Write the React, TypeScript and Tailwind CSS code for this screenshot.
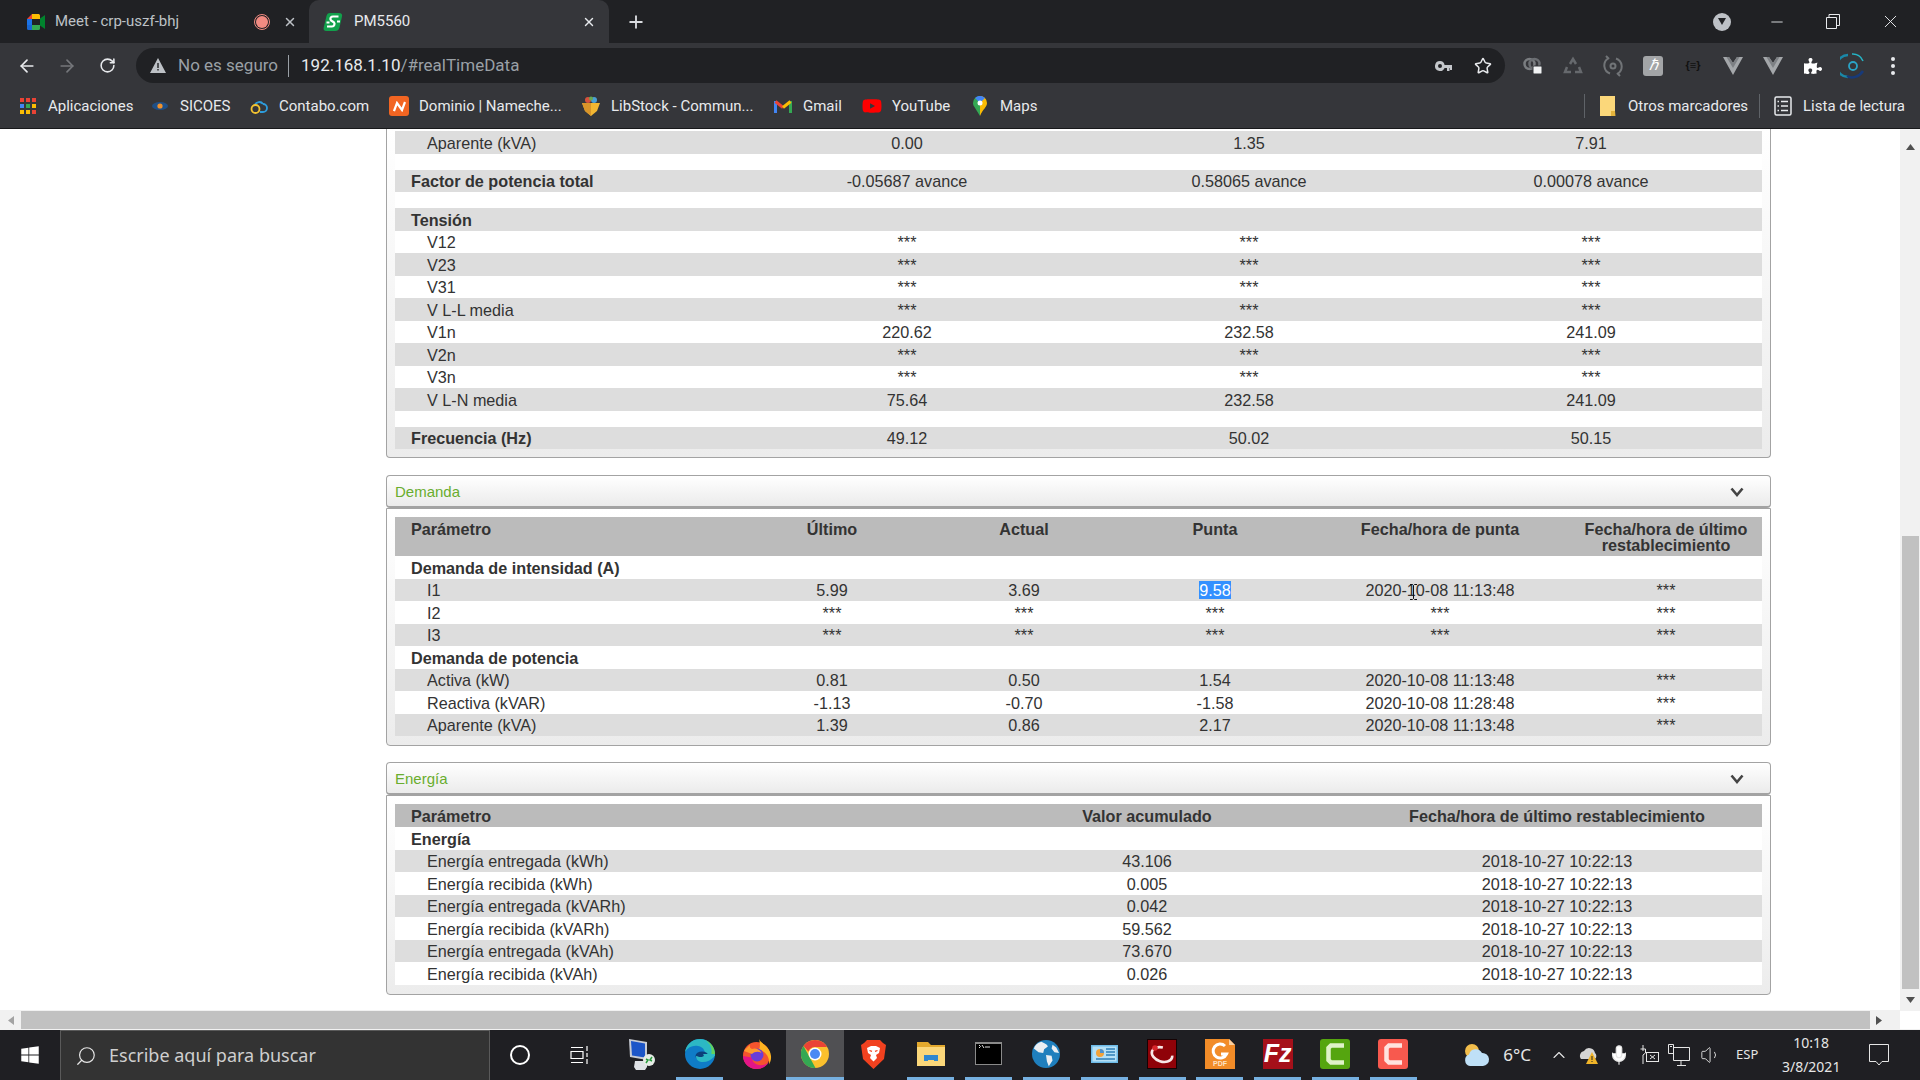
import React from "react";
import { ArrowLeft, ArrowRight, RotateCw, Star, X, Plus, Mic, Volume1, Search, ChevronUp, Minus } from "lucide-react";
import { FaPuzzlePiece, FaWindows, FaYoutube } from "react-icons/fa";

const Z = { fontFamily: '"Liberation Sans", Arial, sans-serif' };
const UI = { fontFamily: 'Roboto, "Noto Sans", sans-serif' };

type Row = { label: string; vals?: string[]; bold?: boolean; tint?: boolean; spacer?: boolean };

const topRows: Row[] = [
  { label: "Aparente (kVA)", vals: ["0.00", "1.35", "7.91"], tint: true },
  { label: "", spacer: true },
  { label: "Factor de potencia total", vals: ["-0.05687 avance", "0.58065 avance", "0.00078 avance"], bold: true, tint: true },
  { label: "", spacer: true },
  { label: "Tensión", vals: ["", "", ""], bold: true, tint: true },
  { label: "V12", vals: ["***", "***", "***"] },
  { label: "V23", vals: ["***", "***", "***"], tint: true },
  { label: "V31", vals: ["***", "***", "***"] },
  { label: "V L-L media", vals: ["***", "***", "***"], tint: true },
  { label: "V1n", vals: ["220.62", "232.58", "241.09"] },
  { label: "V2n", vals: ["***", "***", "***"], tint: true },
  { label: "V3n", vals: ["***", "***", "***"] },
  { label: "V L-N media", vals: ["75.64", "232.58", "241.09"], tint: true },
  { label: "", spacer: true },
  { label: "Frecuencia (Hz)", vals: ["49.12", "50.02", "50.15"], bold: true, tint: true },
];

const demRows: Row[] = [
  { label: "Demanda de intensidad (A)", vals: ["", "", "", "", ""], bold: true },
  { label: "I1", vals: ["5.99", "3.69", "9.58", "2020-10-08 11:13:48", "***"], tint: true },
  { label: "I2", vals: ["***", "***", "***", "***", "***"] },
  { label: "I3", vals: ["***", "***", "***", "***", "***"], tint: true },
  { label: "Demanda de potencia", vals: ["", "", "", "", ""], bold: true },
  { label: "Activa (kW)", vals: ["0.81", "0.50", "1.54", "2020-10-08 11:13:48", "***"], tint: true },
  { label: "Reactiva (kVAR)", vals: ["-1.13", "-0.70", "-1.58", "2020-10-08 11:28:48", "***"] },
  { label: "Aparente (kVA)", vals: ["1.39", "0.86", "2.17", "2020-10-08 11:13:48", "***"], tint: true },
];

const D = "2018-10-27 10:22:13";
const eneRows: Row[] = [
  { label: "Energía", vals: ["", ""], bold: true },
  { label: "Energía entregada (kWh)", vals: ["43.106", D], tint: true },
  { label: "Energía recibida (kWh)", vals: ["0.005", D] },
  { label: "Energía entregada (kVARh)", vals: ["0.042", D], tint: true },
  { label: "Energía recibida (kVARh)", vals: ["59.562", D] },
  { label: "Energía entregada (kVAh)", vals: ["73.670", D], tint: true },
  { label: "Energía recibida (kVAh)", vals: ["0.026", D] },
];

function DataRows({ rows, grid }: { rows: Row[]; grid: string }) {
  return (
    <>
      {rows.map((r, i) =>
        r.spacer ? (
          <div key={i} className="h-[16px] bg-white" />
        ) : (
          <div key={i} className={`grid ${grid} h-[22.5px] items-center pt-[1px] leading-[20px] ${r.tint ? "bg-[#dddddd]" : "bg-white"}`}>
            <div className={r.bold ? "pl-[16px] font-bold" : "pl-[32px]"}>{r.label}</div>
            {(r.vals || []).map((v, j) => (
              <div key={j} className="relative text-center">
                {v === "9.58" ? <span className="bg-[#3390ff] text-white">{v}</span> : v}
                {v === "2020-10-08 11:13:48" && r.label === "I1" && <Cursor />}
              </div>
            ))}
          </div>
        )
      )}
    </>
  );
}

function Cursor() {
  return (
    <svg className="absolute left-[99px] top-[4px]" width="9" height="16" viewBox="0 0 9 16" fill="none" stroke="#111" strokeWidth="1">
      <path d="M1 .5h2.500L4.500 1.500 5.500.5H8M4.500 1.500v13M1 15.500h2.500l1-1 1 1H8" />
    </svg>
  );
}

function SectionHead({ title }: { title: string }) {
  return (
    <div className="flex h-[33px] items-center justify-between rounded-[4px] border border-b-2 border-[#a3a3a3] bg-linear-to-b from-white to-[#ebebeb] pl-[8px] pr-[26px] pt-[2px]">
      <span className="text-[15px] text-[#69ad2e]">{title}</span>
      <svg width="14" height="10" viewBox="0 0 14 10" fill="none" stroke="#444" strokeWidth="2.600">
        <path d="M1.500 1.500 7 8l5.500-6.500" />
      </svg>
    </div>
  );
}

function Panel({ children, open }: { children: React.ReactNode; open?: boolean }) {
  return (
    <div className={`rounded-b-[4px] border border-[#a3a3a3] bg-linear-to-b from-white to-[#ececec] px-[8px] ${open ? "border-t-0 pb-[8px] pt-[2px]" : "pb-[9px] pt-[8px]"}`}>
      {children}
    </div>
  );
}

/* ---------- browser icons ---------- */
function MeetIcon() {
  return (
    <svg width="20" height="18" viewBox="0 0 20 18">
      <path d="M6 1h7v5H1z" fill="#ea4335" />
      <path d="M6 1h6.500A1.500 1.500 0 0 1 14 2.500V6H6z" fill="#fbbc04" />
      <path d="M1 6h5v6H1z" fill="#1a73e8" />
      <path d="M1 12h5v5H2.500A1.500 1.500 0 0 1 1 15.500z" fill="#1967d2" />
      <path d="M6 12h8v3.500a1.500 1.500 0 0 1-1.500 1.500H6z" fill="#34a853" />
      <path d="M14 5.500 19 2v14l-5-3.500z" fill="#00832d" />
      <path d="M6 6h8v6H6z" fill="#202124" />
    </svg>
  );
}
function SchneiderIcon() {
  return (
    <svg width="20" height="20" viewBox="0 0 20 20">
      <path d="M7 1h9c2.500 0 3.500 1.500 3 3.500l-2.500 11c-.6 2.400-2 3.500-4.500 3.500H3.500C1 19 .2 17.500.7 15.500L3.500 4C4 2 5 1 7 1z" fill="#12a04c" />
      <path d="M15.500 4.500H10C8 4.500 7.200 6 7.500 7.500S10 9.500 11 10.500s.5 4-2 4H4" fill="none" stroke="#fff" strokeWidth="2.200" strokeLinejoin="round" />
      <path d="M3.500 10.500h3M14 9.500h3" stroke="#fff" strokeWidth="1.800" />
    </svg>
  );
}
function AppsIcon() {
  const c = ["bg-[#ea4335]", "bg-[#ea4335]", "bg-[#ea4335]", "bg-[#4285f4]", "bg-[#34a853]", "bg-[#fbbc04]", "bg-[#fbbc04]", "bg-[#fbbc04]", "bg-[#ea4335]"];
  return (
    <div className="grid h-[16px] w-[16px] grid-cols-3 gap-[1.500px]">
      {c.map((k, i) => (
        <span key={i} className={k} />
      ))}
    </div>
  );
}
function SicoesIcon() {
  return (
    <svg width="18" height="16" viewBox="0 0 18 16">
      <ellipse cx="9" cy="8" rx="8" ry="4" fill="#1f4f86" />
      <circle cx="9" cy="8" r="2.600" fill="#f0912c" />
    </svg>
  );
}
function ContaboIcon() {
  return (
    <svg width="20" height="20" viewBox="0 0 20 20" fill="none" strokeWidth="1.800">
      <path d="M6 9a4.500 4.500 0 0 1 8-1" stroke="#2d9cdb" />
      <path d="M14 8a4 4 0 1 1 0 8h-3" stroke="#2d9cdb" />
      <circle cx="6.500" cy="13" r="4" stroke="#f2c230" />
    </svg>
  );
}
function NameIcon() {
  return (
    <div className="flex h-[20px] w-[20px] items-center justify-center rounded-[3px] bg-[#f26522]">
      <svg width="13" height="11" viewBox="0 0 13 11" fill="none" stroke="#fff" strokeWidth="2.200">
        <path d="M1 10 4 2l5 7 3-8" />
      </svg>
    </div>
  );
}
function LibStockIcon() {
  return (
    <svg width="20" height="22" viewBox="0 0 20 22">
      <path d="M1 8h18l-3 8-6 5-6-5z" fill="#f2b632" />
      <path d="M1 8h9v13l-6-5z" fill="#d9952a" />
      <circle cx="7" cy="5" r="3" fill="#d6523c" />
      <circle cx="13" cy="5" r="3" fill="#4a9fd4" />
      <circle cx="10" cy="3.500" r="2" fill="#69a84f" />
    </svg>
  );
}
function GmailIcon() {
  return (
    <svg width="18" height="14" viewBox="0 0 18 14" fill="none" strokeWidth="3">
      <path d="M1.500 14V2" stroke="#4285f4" />
      <path d="M16.500 14V2" stroke="#34a853" />
      <path d="M1.500 2.500 9 8.500" stroke="#ea4335" />
      <path d="M9 8.500l7.500-6" stroke="#fbbc04" />
    </svg>
  );
}
function MapsIcon() {
  return (
    <svg width="14" height="20" viewBox="0 0 14 20">
      <path d="M7 0a7 7 0 0 0-7 7c0 1.500.5 2.700 1.300 3.800L7 20z" fill="#34a853" />
      <path d="M7 0a7 7 0 0 1 7 7c0 4-4 6-7 13z" fill="#fbbc04" />
      <path d="M2 2 7 7l5-5a7 7 0 0 0-10 0z" fill="#4285f4" />
      <circle cx="7" cy="7" r="2.500" fill="#fff" />
    </svg>
  );
}
function FolderIcon() {
  return (
    <svg width="16" height="22" viewBox="0 0 16 22">
      <path d="M0 1h15v15l-4 5H0z" fill="#fbd77a" />
      <path d="M11 21v-5h4l.5 5z" fill="#e5b43c" />
    </svg>
  );
}
function ListIcon() {
  return (
    <svg width="18" height="20" viewBox="0 0 18 20" fill="none" stroke="#e8eaed" strokeWidth="1.500">
      <rect x="1" y="1" width="16" height="18" rx="1.500" />
      <path d="M7 5.500h7M7 10h7M7 14.500h7M3.500 5.500h1.500M3.500 10h1.500M3.500 14.500h1.500" />
    </svg>
  );
}
function KeyIcon() {
  return (
    <svg width="18" height="12" viewBox="0 0 18 12" fill="#c4c7cb">
      <path d="M5 1a5 5 0 1 0 4.600 7H12v3h2.500V8H15v2h2V5H9.600A5 5 0 0 0 5 1zm0 3a2 2 0 1 1 0 4 2 2 0 0 1 0-4z" />
    </svg>
  );
}
function VIcon() {
  return (
    <svg width="20" height="18" viewBox="0 0 20 18">
      <path d="M0 0h6l4 6 4-6h6L10 18z" fill="#a4a7aa" />
      <path d="M3.500 0H6l4 6 4-6h2.500L10 11z" fill="#7d8084" />
    </svg>
  );
}
function BookmarkItem({ icon, text, w }: { icon: React.ReactNode; text: string; w: string }) {
  return (
    <div className="flex items-center">
      <span className="flex w-[20px] justify-center">{icon}</span>
      <span className={`ml-[10px] whitespace-nowrap text-[15px] text-[#e8eaed] ${w}`}>{text}</span>
    </div>
  );
}

/* ---------- taskbar icons ---------- */
function RemoteIcon() {
  return (
    <svg width="30" height="34" viewBox="0 0 30 34">
      <path d="M2 2l18 3v18L3 20z" fill="#c8ccd4" />
      <path d="M4 4l14 2.500v14L5 18.500z" fill="#1d56c8" />
      <path d="M8 24h12v6l-2 3H9l-2-3z" fill="#dfe2e6" />
      <circle cx="22" cy="23" r="6" fill="#e6ece6" />
      <path d="M19 26l2-3-2-1M25 20l-2 3 2 1" stroke="#2a9d3f" strokeWidth="1.500" fill="none" />
    </svg>
  );
}
function EdgeIcon() {
  return (
    <svg width="30" height="30" viewBox="0 0 30 30">
      <circle cx="15" cy="15" r="15" fill="#0f7cc7" />
      <path d="M30 17C30 7 23 0 15 0 7 0 1 6 0 13c3-5 8-7 13-6 6 1 8 6 6 10z" fill="#2cb8c4" />
      <path d="M30 15c0-6-4-12-10-14 5 3 8 8 6 16z" fill="#63d25b" />
      <ellipse cx="17" cy="17" rx="6.500" ry="4.500" fill="#0c3f7a" />
      <path d="M11 17c0 4 3 6 7 6 4 0 8-2 11-5l1-3H18c2 2 0 3-2 3-2 0-3-.5-5-1z" fill="#2cb8c4" />
    </svg>
  );
}
function FirefoxIcon() {
  return (
    <svg width="30" height="30" viewBox="0 0 30 30">
      <circle cx="14.500" cy="16.500" r="13.500" fill="#f5542e" />
      <path d="M17 0c2 5 11 7 12 17 .3 3-.5 6-2 8.500 1-7-3-13-10-15 1.500-3 1-7 0-10.500z" fill="#ffb320" />
      <path d="M1 17c0 7 6 13 13.500 13 6 0 10-3 12.500-7-3 3-8 4-12 2.500-3.500-1.300-5-4-5-7z" fill="#e31587" />
      <circle cx="15" cy="16" r="6.500" fill="#6a3dd8" />
      <path d="M2 12c2-3 4-4 6-6-.5 2 0 3 2 4 3-1.500 8 0 9.500 4-3-2-7-1.500-9.500 1z" fill="#ff9a2e" />
    </svg>
  );
}
function ChromeIcon() {
  return (
    <svg width="28" height="28" viewBox="0 0 28 28">
      <circle cx="14" cy="14" r="14" fill="#fbc02d" />
      <path d="M14 0a14 14 0 0 1 12.100 7H14a7 7 0 0 0-6.600 4.500L2.500 6A14 14 0 0 1 14 0z" fill="#ea4335" />
      <path d="M2.500 6l6 11 6 11A14 14 0 0 1 2.500 6z" fill="#34a853" />
      <circle cx="14" cy="14" r="6.500" fill="#fff" />
      <circle cx="14" cy="14" r="5" fill="#4a8af4" />
    </svg>
  );
}
function BraveIcon() {
  return (
    <svg width="25" height="30" viewBox="0 0 25 30">
      <path d="M6 1h13l3 3 3 2-2 14-10.500 10L2 20 0 6l3-2z" fill="#f1411f" />
      <path d="M6 9l4-2h5l4 2-1 5-3 2 1 3-3.500 3.500L9 19l1-3-3-2z" fill="#fff" />
      <path d="M8.500 11.500l2.500.8M16.500 11.500l-2.500.8" stroke="#f1411f" strokeWidth="1.300" />
    </svg>
  );
}
function ExplorerIcon() {
  return (
    <svg width="28" height="24" viewBox="0 0 28 24">
      <path d="M0 0h11l3 3h14v21H0z" fill="#e3a92e" />
      <path d="M0 5h28v19H0z" fill="#fbd77a" />
      <path d="M7 19v-6h14v6h-4v5h-6v-5z" fill="#2f87cf" />
      <path d="M11 24v-6h6v6z" fill="#fbd77a" />
    </svg>
  );
}
function TerminalIcon() {
  return (
    <div className="flex h-[23px] w-[27px] flex-col border border-t-[2px] border-[#8a8a8a] bg-black pl-[2px]">
      <svg width="14" height="6" viewBox="0 0 14 6" stroke="#ddd" fill="none"><path d="M1 1l1.500 1.500L1 4M4 1l2 3M7 3h5" /></svg>
    </div>
  );
}
function GlobeIcon() {
  return (
    <svg width="28" height="28" viewBox="0 0 30 30">
      <circle cx="15" cy="15" r="15" fill="#1f7fbd" />
      <path d="M10 2c3 2 6 2 7 5l-4 3-1 4-5-1-5-4c1-3 4-6 8-7zM15 16l6 1 1 5-4 6-2-5zM22 5l4 3 3 6-5-1-3-4z" fill="#e9eef2" />
    </svg>
  );
}
function CpanelIcon() {
  return (
    <svg width="27" height="18" viewBox="0 0 27 18">
      <rect width="27" height="18" fill="#6dbbe8" />
      <rect x="1.500" y="1.500" width="24" height="15" fill="#b5e0f6" />
      <circle cx="9" cy="8" r="4" fill="#f2a33a" />
      <path d="M9 8V4a4 4 0 0 1 4 4z" fill="#4c92d1" />
      <path d="M15 4h9M15 7h9M15 10h9M5 14h19" stroke="#2e7fb8" strokeWidth="1.500" />
    </svg>
  );
}
function RedArcIcon() {
  return (
    <svg width="30" height="30" viewBox="0 0 30 30">
      <rect x=".5" y=".5" width="29" height="29" fill="#8f0208" stroke="#160203" />
      <ellipse cx="15" cy="15.500" rx="10.500" ry="7" fill="none" stroke="#f7e6e6" strokeWidth="2.600" strokeDasharray="40 13" transform="rotate(18 15 15.500)" />
      <circle cx="8" cy="9" r="2.800" fill="#d8262c" />
    </svg>
  );
}
function FoxitIcon() {
  return (
    <svg width="30" height="30" viewBox="0 0 30 30">
      <path d="M0 0h24l6 6v24H0z" fill="#f28c28" />
      <path d="M24 0l6 6h-6z" fill="#fbd0a0" />
      <path d="M20 7a7 7 0 1 0 1.500 8H16" fill="none" stroke="#fff" strokeWidth="3" />
      <text x="15" y="27" textAnchor="middle" fontSize="7" fill="#fde3c4" fontWeight="700" fontFamily="Liberation Sans">PDF</text>
    </svg>
  );
}
function ZillaIcon() {
  return (
    <div className="flex h-[30px] w-[30px] items-center justify-center bg-[#a5101a]">
      <span className="text-[25px] font-bold italic leading-none text-white" style={Z}>Fz</span>
    </div>
  );
}
function CamIcon({ bg, ink }: { bg: string; ink: string }) {
  return (
    <div className={`flex h-[30px] w-[30px] items-center justify-center rounded-[3px] ${bg}`}>
      <svg width="19" height="22" viewBox="0 0 19 22" fill="none" stroke={ink} strokeWidth="4.500"><path d="M18 2.500H5L2.500 5v12L5 19.500h13" /></svg>
    </div>
  );
}

function Slot({ children, line, active }: { children: React.ReactNode; line?: boolean; active?: boolean }) {
  return (
    <div className={`flex h-[50px] w-[57.800px] flex-col items-center ${active ? "bg-[#505053]" : ""}`}>
      <div className="flex h-[47px] items-center justify-center">{children}</div>
      <div className={`h-[3px] ${active ? "w-full" : "w-[47px]"} ${line ? "bg-[#76b0e0]" : ""}`} />
    </div>
  );
}

function Th({ children, left }: { children: React.ReactNode; left?: boolean }) {
  return <div className={left ? "pl-[16px]" : "text-center"}>{children}</div>;
}

export default function App() {
  const g4 = "grid-cols-[341px_342px_342px_342px]";
  const g6 = "grid-cols-[341px_192px_192px_190px_260px_192px]";
  const g3 = "grid-cols-[547px_410px_410px]";
  return (
    <div className="flex h-[1080px] w-[1920px] flex-col overflow-hidden bg-white" style={Z}>
      {/* Tab strip */}
      <div className="flex h-[43px] shrink-0 items-stretch bg-[#202124] text-[15px]" style={UI}>
        <div className="flex w-[309px] items-center pl-[26px] pr-[12px] text-[#bdc1c6]">
          <MeetIcon />
          <span className="ml-[9px] flex-1">Meet - crp-uszf-bhj</span>
          <span className="flex h-[16px] w-[16px] items-center justify-center rounded-full border border-[#f28b82]"><span className="h-[12px] w-[12px] rounded-full bg-[#f28b82]" /></span>
          <X size={14} strokeWidth={2.500} className="ml-[13px]" />
        </div>
        <div className="flex w-[300px] items-center rounded-t-[10px] bg-[#35363a] pl-[14px] pr-[13px] text-[#e8eaed]">
          <SchneiderIcon />
          <span className="ml-[11px] flex-1">PM5560</span>
          <X size={14} strokeWidth={2.500} />
        </div>
        <div className="ml-[17px] flex items-center text-[#dadce0]"><Plus size={20} strokeWidth={2.200} /></div>
        <div className="ml-auto flex items-center text-[#e8eaed]">
          <div className="flex w-[44px] justify-center">
            <span className="flex h-[18px] w-[18px] items-center justify-center rounded-full bg-[#bdc1c6]">
              <svg width="8" height="7" viewBox="0 0 8 7"><path d="M0 0h8L4 7z" fill="#202124" /></svg>
            </span>
          </div>
          <div className="ml-[5px] flex w-[56px] justify-center"><Minus size={18} strokeWidth={1.200} /></div>
          <div className="flex w-[56px] justify-center">
            <svg width="14" height="15" viewBox="0 0 14 15" fill="none" stroke="#e8eaed"><path d="M.5 3.500h10v11H.5zM3 3.500V.5h10.500v11h-3" /></svg>
          </div>
          <div className="flex w-[59px] justify-center"><X size={21} strokeWidth={1.100} /></div>
        </div>
      </div>

      {/* Toolbar */}
      <div className="flex h-[43px] shrink-0 items-center bg-[#35363a] pl-[7px] pt-[2px]" style={UI}>
        <div className="flex w-[40px] justify-center text-[#e8eaed]"><ArrowLeft size={20} strokeWidth={2} /></div>
        <div className="flex w-[40px] justify-center text-[#75777b]"><ArrowRight size={20} strokeWidth={2} /></div>
        <div className="flex w-[40px] justify-center text-[#e8eaed]"><RotateCw size={17} strokeWidth={2.200} /></div>
        <div className="ml-[9px] flex h-[35px] w-[1369px] items-center rounded-full bg-[#202124] pl-[14px] pr-[13px]">
          <svg width="16" height="15" viewBox="0 0 16 15"><path d="M8 0l8 15H0z" fill="#bdc1c6" /><path d="M7.300 5h1.400v5H7.300zM7.300 11h1.400v1.500H7.300z" fill="#202124" /></svg>
          <span className="ml-[12px] text-[17px] text-[#9aa0a6]">No es seguro</span>
          <span className="ml-[10px] h-[22px] w-px bg-[#9aa0a6]" />
          <span className="ml-[12px] text-[17px] text-[#e8eaed]">192.168.1.10<span className="text-[#9aa0a6]">/#realTimeData</span></span>
          <span className="ml-auto"><KeyIcon /></span>
          <Star size={18} strokeWidth={2} className="ml-[21px] text-[#e8eaed]" />
        </div>
        <div className="ml-[8px] flex items-center">
          <div className="flex w-[40px] justify-center">
            <svg width="20" height="20" viewBox="0 0 20 20" fill="none"><circle cx="6.500" cy="8" r="5" stroke="#7a7d80" strokeWidth="2.500" /><circle cx="11.500" cy="8" r="5" stroke="#6b6e72" strokeWidth="2.500" /><rect x="10" y="10" width="9" height="8" rx="1" fill="#f1f3f4" stroke="#35363a" /></svg>
          </div>
          <div className="flex w-[40px] justify-center">
            <svg width="20" height="20" viewBox="0 0 20 20" fill="none" stroke="#66696d" strokeWidth="2.500"><path d="M7 8l3-5 3 5M4 11l-2 5h6M16 11l2 5h-6" /></svg>
          </div>
          <div className="flex w-[40px] justify-center">
            <svg width="20" height="22" viewBox="0 0 20 22" fill="none" stroke="#717477" strokeWidth="2"><path d="M5 3.500a8.500 8.500 0 0 0 2 15M15 18.500a8.500 8.500 0 0 0-2-15M3 1l3 3M17 21l-3-3" /><circle cx="10" cy="11" r="2.500" /></svg>
          </div>
          <div className="flex w-[40px] justify-center">
            <span className="flex h-[20px] w-[20px] items-center justify-center rounded-[3px] bg-[#a3a5a7] text-[15px] italic text-white" style={Z}>ℏ</span>
          </div>
          <div className="flex w-[40px] justify-center text-[11px] font-bold text-[#111]" style={Z}>{"{≡}"}</div>
          <div className="flex w-[40px] justify-center"><VIcon /></div>
          <div className="flex w-[40px] justify-center"><VIcon /></div>
          <div className="flex w-[40px] justify-center text-white"><FaPuzzlePiece size={18} /></div>
          <div className="flex w-[40px] justify-center">
            <svg width="26" height="28" viewBox="0 0 26 28" fill="none"><path d="M8 3a11 11 0 0 0 0 22" stroke="#1a88a8" strokeWidth="2.500" /><path d="M12 2a11 11 0 0 1 11 7" stroke="#25b5c6" strokeWidth="1.500" /><path d="M7 24c5 3 12 1 16-5" stroke="#173a7a" strokeWidth="2.500" /><circle cx="13" cy="14" r="4" stroke="#2aa3c6" strokeWidth="1.800" /></svg>
          </div>
          <div className="flex w-[40px] justify-center">
            <svg width="4" height="18" viewBox="0 0 4 18" fill="#e8eaed"><circle cx="2" cy="2" r="2" /><circle cx="2" cy="9" r="2" /><circle cx="2" cy="16" r="2" /></svg>
          </div>
        </div>
      </div>

      {/* Bookmarks */}
      <div className="flex h-[43px] shrink-0 items-center gap-[20px] border-b border-[#18191b] bg-[#35363a] pb-[2px] pl-[18px] pr-[19px]" style={UI}>
        <BookmarkItem icon={<AppsIcon />} text="Aplicaciones" w="w-[82px]" />
        <BookmarkItem icon={<SicoesIcon />} text="SICOES" w="w-[49px]" />
        <BookmarkItem icon={<ContaboIcon />} text="Contabo.com" w="w-[90px]" />
        <BookmarkItem icon={<NameIcon />} text="Dominio | Nameche..." w="w-[142px]" />
        <BookmarkItem icon={<LibStockIcon />} text="LibStock - Commun..." w="w-[142px]" />
        <BookmarkItem icon={<GmailIcon />} text="Gmail" w="w-[39px]" />
        <BookmarkItem icon={<FaYoutube size={20} color="#ff0000" />} text="YouTube" w="w-[58px]" />
        <BookmarkItem icon={<MapsIcon />} text="Maps" w="w-[36px]" />
        <div className="ml-auto flex items-center">
          <span className="h-[24px] w-px bg-[#5f6368]" />
          <span className="ml-[15px]"><FolderIcon /></span>
          <span className="ml-[12px] w-[118px] whitespace-nowrap text-[15px] text-[#e8eaed]">Otros marcadores</span>
          <span className="ml-[13px] h-[24px] w-px bg-[#5f6368]" />
          <span className="ml-[14px]"><ListIcon /></span>
          <span className="ml-[11px] w-[98px] whitespace-nowrap text-[15px] text-[#e8eaed]">Lista de lectura</span>
        </div>
      </div>

      {/* Page */}
      <div className="flex min-h-0 flex-1">
        <div className="flex-1 overflow-hidden pl-[386px] text-[16.2px] text-[#333333]">
          <div className="w-[1385px]">
            <Panel open>
              <DataRows rows={topRows} grid={g4} />
            </Panel>
            <div className="mt-[17px]"><SectionHead title="Demanda" /></div>
            <Panel>
              <div className={`grid ${g6} h-[39px] bg-[#bbbbbb] pt-[4px] font-bold leading-[16px]`}>
                <Th left>Parámetro</Th><Th>Último</Th><Th>Actual</Th><Th>Punta</Th><Th>Fecha/hora de punta</Th><Th>Fecha/hora de último restablecimiento</Th>
              </div>
              <DataRows rows={demRows} grid={g6} />
            </Panel>
            <div className="mt-[16px]"><SectionHead title="Energía" /></div>
            <Panel>
              <div className={`grid ${g3} h-[23px] items-center bg-[#bbbbbb] pt-[1px] font-bold leading-[20px]`}>
                <Th left>Parámetro</Th><Th>Valor acumulado</Th><Th>Fecha/hora de último restablecimiento</Th>
              </div>
              <DataRows rows={eneRows} grid={g3} />
            </Panel>
          </div>
        </div>
        <div className="flex w-[20px] flex-col bg-[#f1f1f1]">
          <div className="flex h-[24px] items-end justify-center pb-[3px]">
            <svg width="9" height="6" viewBox="0 0 9 6"><path d="M4.500 0 9 6H0z" fill="#505050" /></svg>
          </div>
          <div className="flex-1" />
          <div className="mx-auto h-[453px] w-[17px] bg-[#c1c1c1]" />
          <div className="flex h-[21px] items-center justify-center">
            <svg width="9" height="6" viewBox="0 0 9 6"><path d="M4.500 6 9 0H0z" fill="#505050" /></svg>
          </div>
        </div>
      </div>

      {/* Horizontal scrollbar */}
      <div className="flex h-[20px] shrink-0 bg-[#f1f1f1] py-[1px]">
        <div className="flex w-[21px] items-center justify-center">
          <svg width="6" height="9" viewBox="0 0 6 9"><path d="M0 4.500 6 0v9z" fill="#a3a3a3" /></svg>
        </div>
        <div className="w-[1849px] bg-[#c1c1c1]" />
        <div className="flex flex-1 items-center justify-center pr-[12px]">
          <svg width="6" height="9" viewBox="0 0 6 9"><path d="M6 4.500 0 0v9z" fill="#505050" /></svg>
        </div>
        <div className="w-[20px] bg-white" />
      </div>

      {/* Taskbar */}
      <div className="flex h-[50px] shrink-0 items-center bg-[#1f1f23] text-[#e6e6e6]" style={{ fontFamily: '"Noto Sans", sans-serif' }}>
        <div className="flex w-[60px] justify-center text-white"><FaWindows size={20} /></div>
        <div className="flex h-[50px] w-[430px] items-center border border-b-0 border-[#5a5a5a] bg-[#333333] pl-[14px]">
          <Search size={22} strokeWidth={1.300} className="-scale-x-100" />
          <span className="ml-[12px] text-[18px] text-[#cfcfcf]">Escribe aquí para buscar</span>
        </div>
        <div className="flex w-[60px] justify-center"><span className="h-[20px] w-[20px] rounded-full border-[2.500px] border-white" /></div>
        <div className="flex w-[60px] justify-center">
          <svg width="20" height="20" viewBox="0 0 20 20" fill="none" stroke="#fff" strokeWidth="1.200"><path d="M1 2.500h12M1 17.500h12M1 6.500h12v7H1zM17 1v5M17 8v4M17 14v5" /></svg>
        </div>
        <div className="flex pl-[3px]">
          <Slot><RemoteIcon /></Slot>
          <Slot line><EdgeIcon /></Slot>
          <Slot><FirefoxIcon /></Slot>
          <Slot line active><ChromeIcon /></Slot>
          <Slot><BraveIcon /></Slot>
          <Slot line><ExplorerIcon /></Slot>
          <Slot line><TerminalIcon /></Slot>
          <Slot line><GlobeIcon /></Slot>
          <Slot line><CpanelIcon /></Slot>
          <Slot line><RedArcIcon /></Slot>
          <Slot line><FoxitIcon /></Slot>
          <Slot line><ZillaIcon /></Slot>
          <Slot line><CamIcon bg="bg-[#55a50f]" ink="#dff2c8" /></Slot>
          <Slot line><CamIcon bg="bg-[#f8594e]" ink="#ffe3df" /></Slot>
        </div>
        <div className="ml-[39px] flex w-[30px] justify-center">
          <svg width="28" height="28" viewBox="0 0 28 28"><circle cx="10" cy="10" r="7" fill="#f2bd4b" /><path d="M8 25a6 6 0 0 1-1-11.500A7 7 0 0 1 20 12a6.500 6.500 0 0 1 1 13z" fill="#bfe0f7" /></svg>
        </div>
        <span className="ml-[12px] w-[26px] whitespace-nowrap text-[17px]">6°C</span>
        <div className="ml-[15px] flex w-[30px] justify-center"><ChevronUp size={20} strokeWidth={1.300} /></div>
        <div className="flex w-[30px] justify-center">
          <svg width="22" height="22" viewBox="0 0 22 22"><path d="M3 15a5 5 0 0 1 3-8 6 6 0 0 1 11 2 4 4 0 0 1 0 6z" fill="#d5d5d5" /><path d="M14 8l6 12H8z" fill="#f0b429" /><path d="M13.500 12h1v4h-1zM13.500 17h1v1h-1z" fill="#222" /></svg>
        </div>
        <div className="flex w-[29px] justify-center"><Mic size={22} strokeWidth={1.300} fill="#fff" /></div>
        <div className="flex w-[31px] justify-center">
          <svg width="20" height="22" viewBox="0 0 20 22" fill="none" stroke="#e6e6e6"><rect x="7.500" y="8.500" width="12" height="9" /><path d="M4 1v6M1.500 5h5v4l-2.500 2v9M11 11l5 4M16 11l-5 4" /></svg>
        </div>
        <div className="flex w-[30px] justify-center">
          <svg width="22" height="24" viewBox="0 0 22 24" fill="none" stroke="#e6e6e6"><path d="M5.500 4.500h16v13h-16zM13 18v4M9 22.500h9M.5 1.500h5v9h-5zM2 3.500h2" /></svg>
        </div>
        <div className="flex w-[34px] justify-center"><Volume1 size={22} strokeWidth={1} /></div>
        <div className="w-[38px] text-center text-[13px]">ESP</div>
        <div className="w-[90px] text-center text-[14px] leading-[24px]">
          <div>10:18</div>
          <div>3/8/2021</div>
        </div>
        <div className="flex w-[46px] justify-center">
          <svg width="20" height="22" viewBox="0 0 20 22" fill="none" stroke="#e6e6e6"><path d="M.5.500h19v17h-6.500L10 21l-3-3.500H.5z" /></svg>
        </div>
      </div>
    </div>
  );
}
